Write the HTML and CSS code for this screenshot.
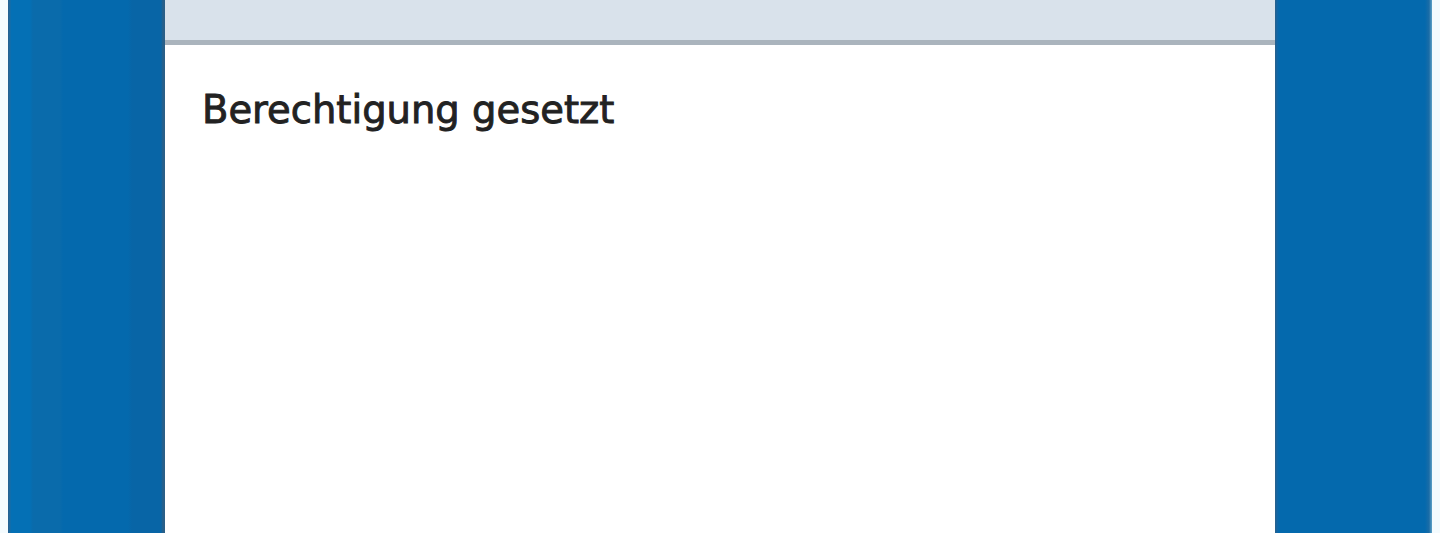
FILE: index.html
```html
<!DOCTYPE html>
<html lang="de">
<head>
<meta charset="utf-8">
<title>Berechtigung gesetzt</title>
<link rel="stylesheet" href="styles.css">
</head>
<body>
<div class="page">
  <div class="side side-left"></div>
  <main class="panel">
    <div class="panel-header"></div>
    <div class="panel-body">
      <p class="message">Berechtigung gesetzt</p>
    </div>
  </main>
  <div class="side side-right"></div>
</div>
</body>
</html>
```

FILE: styles.css
```css
html, body {
  margin: 0;
  padding: 0;
  height: 100%;
  background: #f4fbfe;
}

.page {
  display: flex;
  height: 533px;
  padding: 0 8px;
  box-sizing: border-box;
}

.side {
  width: 157px;
  flex: none;
  background: #0469ad;
}

.side-left {
  background: linear-gradient(to right,
    #245f8e 0, #1e6aa0 2px, #0470b5 3px, #0470b5 22px,
    #0a6bab 25px, #0a6bab 52px, #0469ad 55px, #0469ad 120px,
    #0865a6 124px, #0865a6 153px, #2a5f88 155px, #2a5f88 157px);
}

.side-right {
  background: linear-gradient(to right,
    #2a5f88 0, #1466a4 2px, #0469ad 4px, #0469ad 150px,
    #1b6ca6 154px, #5fa2c7 157px);
}

.panel {
  flex: 1;
  display: flex;
  flex-direction: column;
  background: #ffffff;
}

.panel-header {
  height: 40px;
  background: #d9e2eb;
  border-bottom: 5px solid #aab4bd;
  flex: none;
}

.panel-body {
  padding: 0 37px;
}

.message {
  margin: 41px 0 0;
  font-family: "DejaVu Sans", sans-serif;
  font-size: 38.5px;
  line-height: 48px;
  color: #222222;
  -webkit-text-stroke: 0.9px #222222;
}
```
